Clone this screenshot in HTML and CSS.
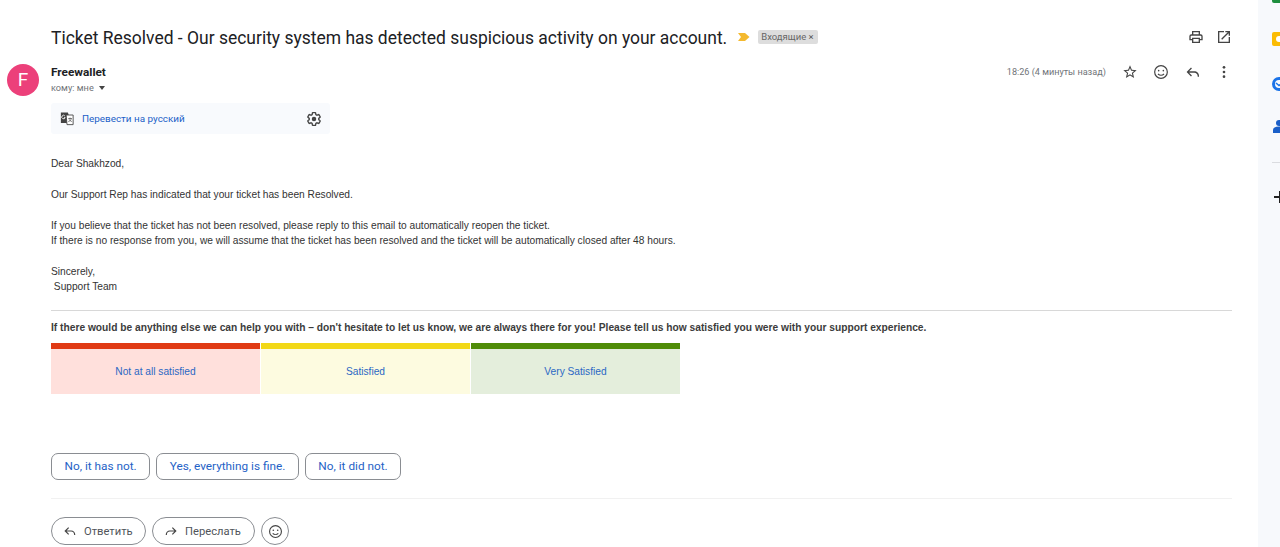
FILE: index.html
```html
<!DOCTYPE html>
<html lang="ru">
<head>
    <meta charset="UTF-8">
    <meta name="viewport" content="width=device-width, initial-scale=1.0">
    <title>Ticket Resolved</title>
    <link rel="stylesheet" href="styles.css">
</head>
<body>
    <div class="app">
        <main class="mail">
            <div class="subject-row">
                <h1 class="subject">Ticket Resolved - Our security system has detected suspicious activity on your account.</h1>
                <svg class="marker" width="12" height="10" viewBox="0 0 12 10"><path d="M0 1h7l4.500 4-4.500 4H0l3-4z" fill="#f4b92f"/></svg>
                <span class="label">Входящие <span class="label-x">×</span></span>
                <div class="subject-tools">
                    <svg width="16" height="16" viewBox="0 0 24 24" fill="#444"><path d="M19 8h-1V3H6v5H5a3 3 0 0 0-3 3v6h4v4h12v-4h4v-6a3 3 0 0 0-3-3zM8 5h8v3H8zm8 14H8v-4h8zm4-4h-2v-2H6v2H4v-4a1 1 0 0 1 1-1h14a1 1 0 0 1 1 1z"/></svg>
                    <svg width="16" height="16" viewBox="0 0 24 24" fill="#444"><path d="M19 19H5V5h7V3H3v18h18v-9h-2zM14 3v2h3.600l-9.800 9.800 1.400 1.400L19 6.400V10h2V3z"/></svg>
                </div>
            </div>

            <div class="sender-row">
                <div class="avatar">F</div>
                <div class="sender-info">
                    <div class="sender-name">Freewallet</div>
                    <div class="sender-to">кому: мне <span class="caret"></span></div>
                </div>
                <div class="sender-meta">
                    <span class="time">18:26 (4 минуты назад)</span>
                    <svg width="16" height="16" viewBox="0 0 24 24" fill="#444"><path d="M22 9.240l-7.190-.62L12 2 9.190 8.630 2 9.240l5.460 4.730L5.820 21 12 17.270 18.180 21l-1.630-7.030zM12 15.400l-3.760 2.270 1-4.280-3.320-2.880 4.380-.38L12 6.100l1.710 4.040 4.380.38-3.320 2.880 1 4.280z"/></svg>
                    <svg width="16" height="16" viewBox="0 0 24 24" fill="none" stroke="#444" stroke-width="1.800"><circle cx="12" cy="12" r="9.500"/><circle cx="8.500" cy="10" r="1.200" fill="#444" stroke="none"/><circle cx="15.500" cy="10" r="1.200" fill="#444" stroke="none"/><path d="M7.500 15c2.500 2.400 6.500 2.400 9 0"/></svg>
                    <svg width="16" height="16" viewBox="0 0 24 24" fill="#444"><path d="M9 5.400L2.400 12 9 18.600l1.400-1.400L6.200 13H14c2.800 0 5 2.200 5 5v1h2v-1c0-3.900-3.100-7-7-7H6.200l4.200-4.200z"/></svg>
                    <svg width="16" height="16" viewBox="0 0 24 24" fill="#444"><circle cx="12" cy="5" r="2"/><circle cx="12" cy="12" r="2"/><circle cx="12" cy="19" r="2"/></svg>
                </div>
            </div>

            <div class="translate">
                <svg width="14" height="15" viewBox="0 0 16 16"><path d="M1 1h8l1 3v9H1z" fill="#444"/><path d="M7 4h8v11H8z" fill="#fff" stroke="#444"/><path d="M9.500 8h4M11.500 7v1M13 8c-.5 2-2 3-3.500 3.500M10.500 9c.5 1 1.500 2 3 2.500" fill="none" stroke="#444" stroke-width=".8"/><path d="M5.500 5a2 2 0 1 0 .4 2H4.500" fill="none" stroke="#fff"/></svg>
                <span class="translate-link">Перевести на русский</span>
                <svg class="translate-gear" width="16" height="16" viewBox="0 0 24 24"><path d="M19.140 12.940c.04-.3.06-.61.06-.94 0-.32-.02-.64-.07-.94l2.030-1.580a.49.49 0 0 0 .12-.61l-1.920-3.320a.488.488 0 0 0-.59-.22l-2.390.96c-.5-.38-1.030-.7-1.620-.94l-.36-2.540a.484.484 0 0 0-.48-.41h-3.840c-.24 0-.43.17-.47.41l-.36 2.540c-.59.24-1.130.57-1.620.94l-2.390-.96c-.22-.08-.47 0-.59.22L2.740 8.870c-.12.21-.08.47.12.61l2.030 1.580c-.05.3-.09.63-.09.94s.02.64.07.94l-2.030 1.580a.49.49 0 0 0-.12.61l1.920 3.320c.12.22.37.29.59.22l2.390-.96c.5.38 1.030.7 1.620.94l.36 2.540c.05.24.24.41.48.41h3.840c.24 0 .44-.17.47-.41l.36-2.540c.59-.24 1.130-.56 1.620-.94l2.390.96c.22.08.47 0 .59-.22l1.920-3.320c.12-.22.07-.47-.12-.61l-2.010-1.580z" fill="none" stroke="#444" stroke-width="2"/><circle cx="12" cy="12" r="3.400" fill="#444"/></svg>
            </div>

            <div class="body-text">
                <p>Dear Shakhzod,</p>
                <p>Our Support Rep has indicated that your ticket has been Resolved.</p>
                <p>If you believe that the ticket has not been resolved, please reply to this email to automatically reopen the ticket.<br>If there is no response from you, we will assume that the ticket has been resolved and the ticket will be automatically closed after 48 hours.</p>
                <p>Sincerely,<br>&nbsp;Support Team</p>
            </div>

            <div class="survey">
                <p class="survey-q">If there would be anything else we can help you with – don't hesitate to let us know, we are always there for you! Please tell us how satisfied you were with your support experience.</p>
                <div class="ratings">
                    <a class="rating rating-bad">Not at all satisfied</a>
                    <a class="rating rating-ok">Satisfied</a>
                    <a class="rating rating-good">Very Satisfied</a>
                </div>
            </div>

            <div class="smart-replies">
                <span class="smart">No, it has not.</span>
                <span class="smart">Yes, everything is fine.</span>
                <span class="smart">No, it did not.</span>
            </div>

            <div class="actions">
                <span class="action action-reply">
                    <svg width="14" height="14" viewBox="0 0 24 24" fill="#444"><path d="M9 5.400L2.400 12 9 18.600l1.400-1.400L6.200 13H14c2.800 0 5 2.200 5 5v1h2v-1c0-3.900-3.100-7-7-7H6.200l4.200-4.200z"/></svg>
                    Ответить
                </span>
                <span class="action action-forward">
                    <svg width="14" height="14" viewBox="0 0 24 24" fill="#444"><path d="M15 5.400l6.600 6.600-6.600 6.600-1.400-1.400 4.200-4.200H10c-2.800 0-5 2.200-5 5v1H3v-1c0-3.900 3.100-7 7-7h7.800l-4.200-4.200z"/></svg>
                    Переслать
                </span>
                <span class="action-emoji">
                    <svg width="15" height="15" viewBox="0 0 24 24" fill="none" stroke="#444" stroke-width="1.800"><circle cx="12" cy="12" r="9.500"/><circle cx="8.500" cy="10" r="1.300" fill="#444" stroke="none"/><circle cx="15.500" cy="10" r="1.300" fill="#444" stroke="none"/><path d="M7.500 15c2.500 2.400 6.500 2.400 9 0"/></svg>
                </span>
            </div>
        </main>

        <aside class="rail">
            <span class="rail-icon rail-green"></span>
            <span class="rail-icon rail-yellow"></span>
            <svg class="rail-icon rail-blue" width="14" height="14" viewBox="0 0 14 14"><circle cx="7" cy="7" r="5.500" fill="none" stroke="#1a73e8" stroke-width="3"/><path d="M4 6l3 2.500L10 6" fill="none" stroke="#1a73e8" stroke-width="1.500"/></svg>
            <svg class="rail-icon rail-person" width="12" height="13" viewBox="0 0 12 13"><circle cx="6" cy="3" r="3" fill="#1a5fc8"/><path d="M0 13v-3c0-2 2-3.500 6-3.500s6 1.500 6 3.500v3z" fill="#1a5fc8"/></svg>
            <span class="rail-line"></span>
            <svg class="rail-icon rail-plus" width="12" height="12" viewBox="0 0 12 12"><path d="M0 6h12M6 0v12" stroke="#222" stroke-width="2"/></svg>
        </aside>
    </div>
</body>
</html>
```

FILE: styles.css
```css
*{
    margin:0;
    padding:0;
    box-sizing:border-box;
}
html,body{
    height:547px;
    overflow:hidden;
}
body{
    background:#fff;
    font-family:"Liberation Sans",Arial,sans-serif;
    color:#222;
}
.app{
    display:flex;
    height:547px;
}
.mail{
    width:1258px;
    flex:none;
    padding:0 26px 0 7px;
    overflow:hidden;
}

/* subject */
.subject-row{
    display:flex;
    align-items:center;
    height:28px;
    margin-top:23px;
    padding-left:44px;
}
.subject{
    padding-top:1px;
    font-family:"Roboto","Noto Sans",sans-serif;
    font-size:17.480px;
    font-weight:400;
    color:#202124;
    white-space:nowrap;
}
.marker{
    margin-left:11px;
}
.label{
    margin-left:8px;
    width:60px;
    height:14px;
    padding:0 3px;
    background:#dddddd;
    border-radius:2px;
    font-family:"Roboto",sans-serif;
    font-size:9.500px;
    line-height:14px;
    color:#666;
    white-space:nowrap;
}
.label-x{
    color:#555;
}
.subject-tools{
    margin-left:auto;
    display:flex;
    gap:12px;
}

/* sender */
.sender-row{
    display:flex;
    align-items:flex-start;
    margin-top:13px;
}
.avatar{
    width:32px;
    height:32px;
    border-radius:50%;
    background:#ec407a;
    color:#fff;
    font-family:"Roboto",sans-serif;
    font-size:19px;
    line-height:32px;
    text-align:center;
}
.sender-info{
    margin-left:12px;
    padding-top:1px;
}
.sender-name{
    font-family:"Roboto",sans-serif;
    font-size:11.800px;
    font-weight:700;
    line-height:14px;
    color:#202124;
}
.sender-to{
    font-family:"Roboto",sans-serif;
    font-size:9.200px;
    line-height:14px;
    margin-top:2px;
    color:#6f7377;
}
.caret{
    display:inline-block;
    margin-left:3px;
    vertical-align:1px;
    border-left:3.500px solid transparent;
    border-right:3.500px solid transparent;
    border-top:4px solid #444;
}
.sender-meta{
    margin-left:auto;
    display:flex;
    align-items:center;
    gap:15.300px;
    height:16px;
}
.time{
    font-family:"Roboto",sans-serif;
    font-size:9.100px;
    color:#6f7377;
    margin-right:1px;
}

/* translate bar */
.translate{
    display:flex;
    align-items:center;
    width:279px;
    height:31px;
    margin:7px 0 0 44px;
    padding:0 8px 0 9px;
    background:#f8fafd;
    border-radius:3px;
}
.translate-link{
    margin-left:8px;
    font-family:"Roboto",sans-serif;
    font-size:9.900px;
    color:#1a5fc8;
}
.translate-gear{
    margin-left:auto;
}

/* message */
.body-text{
    margin:22px 0 0 44px;
    font-size:10.200px;
    line-height:15.400px;
    color:#333;
}
.body-text p{
    margin-bottom:15.400px;
}
.survey{
    margin-left:44px;
    border-top:1px solid #d8d8d8;
}
.survey-q{
    margin-top:10px;
    font-size:10.220px;
    font-weight:700;
    line-height:14px;
    color:#3c3c3c;
    white-space:nowrap;
}
.ratings{
    display:flex;
    gap:1px;
    margin-top:8px;
}
.rating{
    width:209px;
    height:51px;
    border-top:6px solid;
    font-size:10.200px;
    line-height:46px;
    text-align:center;
    color:#2b68c4;
}
.rating-bad{
    background:#ffe0dc;
    border-color:#e03a14;
}
.rating-ok{
    background:#fdfbe0;
    border-color:#f2d816;
}
.rating-good{
    background:#e4eedc;
    border-color:#4f8c08;
}

/* bottom buttons */
.smart-replies{
    display:flex;
    gap:6px;
    margin:59px 0 0 44px;
}
.smart{
    height:27px;
    padding:0 12.500px;
    border:1px solid #8a8d92;
    border-radius:7px;
    font-family:"Roboto",sans-serif;
    font-size:11.800px;
    font-weight:400;
    line-height:25px;
    color:#1f62c6;
    white-space:nowrap;
}
.actions{
    display:flex;
    gap:6px;
    margin:18px 0 0 44px;
    padding-top:18px;
    border-top:1px solid #f1f1f1;
}
.action{
    display:flex;
    align-items:center;
    gap:7px;
    height:28px;
    padding:0 0 0 11px;
    border:1px solid #8a8d92;
    border-radius:14px;
    font-family:"Roboto",sans-serif;
    font-size:11.200px;
    font-weight:400;
    color:#50545a;
    white-space:nowrap;
}
.action-reply{
    width:95px;
}
.action-forward{
    width:103px;
}
.action-emoji{
    display:flex;
    align-items:center;
    justify-content:center;
    width:28px;
    height:28px;
    border:1px solid #8a8d92;
    border-radius:50%;
}

/* side rail, icons run off the window edge */
.rail{
    flex:1;
    position:relative;
    background:#f7f9fc;
    overflow:hidden;
}
.rail-icon,.rail-line{
    position:absolute;
}
.rail-green{
    left:14px;
    top:0;
    width:16px;
    height:3px;
    background:#1e8e3e;
    border-radius:0 0 2px 2px;
}
.rail-yellow{
    left:14px;
    top:32px;
    width:16px;
    height:14px;
    background:#fbbc04;
    border-radius:2px;
}
.rail-yellow::after{
    content:"";
    position:absolute;
    left:4px;
    top:4px;
    width:8px;
    height:6px;
    background:#fff;
    border-radius:3px;
}
.rail-blue{
    left:14px;
    top:77px;
}
.rail-person{
    left:15px;
    top:120px;
}
.rail-line{
    left:14px;
    top:162px;
    width:8px;
    height:1px;
    background:#dadce0;
}
.rail-plus{
    left:16px;
    top:191px;
}
```
